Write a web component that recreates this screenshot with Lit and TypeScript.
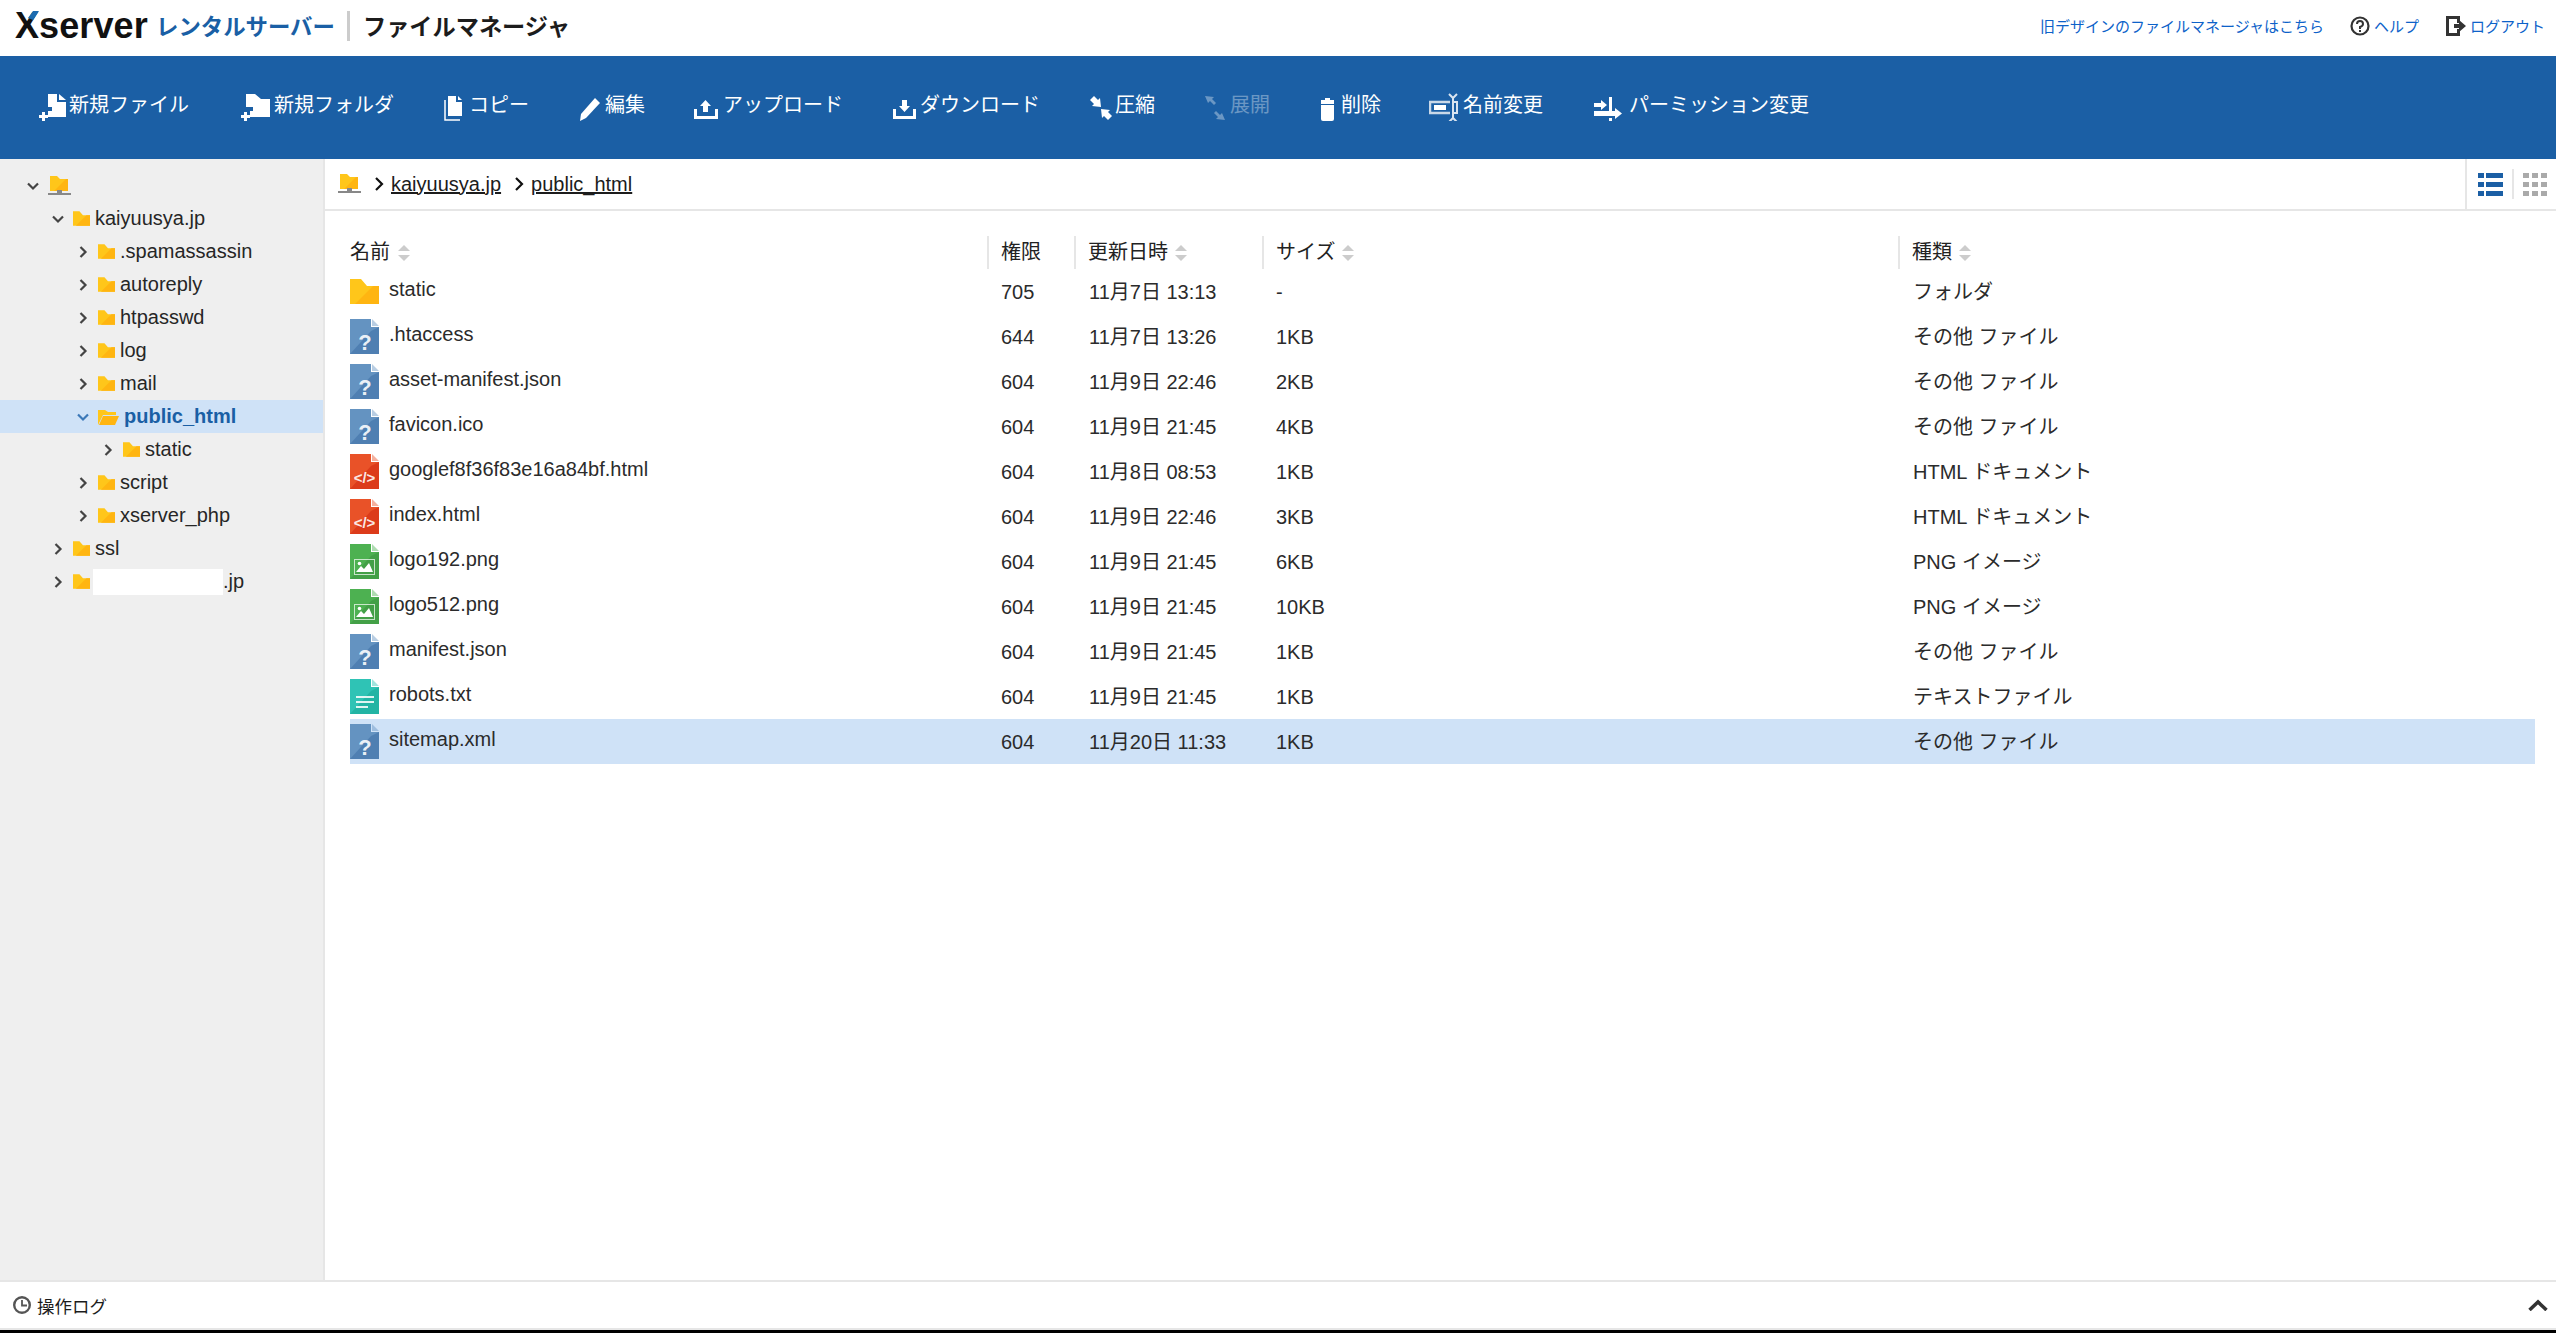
import { LitElement, html, svg, css } from 'lit';
import { customElement } from 'lit/decorators.js';

type Kind = 'folder' | 'other' | 'html' | 'image' | 'text';

const FILES: [string, string, string, string, string, Kind][] = [
  ['static', '705', '11月7日 13:13', '-', 'フォルダ', 'folder'],
  ['.htaccess', '644', '11月7日 13:26', '1KB', 'その他 ファイル', 'other'],
  ['asset-manifest.json', '604', '11月9日 22:46', '2KB', 'その他 ファイル', 'other'],
  ['favicon.ico', '604', '11月9日 21:45', '4KB', 'その他 ファイル', 'other'],
  ['googlef8f36f83e16a84bf.html', '604', '11月8日 08:53', '1KB', 'HTML ドキュメント', 'html'],
  ['index.html', '604', '11月9日 22:46', '3KB', 'HTML ドキュメント', 'html'],
  ['logo192.png', '604', '11月9日 21:45', '6KB', 'PNG イメージ', 'image'],
  ['logo512.png', '604', '11月9日 21:45', '10KB', 'PNG イメージ', 'image'],
  ['manifest.json', '604', '11月9日 21:45', '1KB', 'その他 ファイル', 'other'],
  ['robots.txt', '604', '11月9日 21:45', '1KB', 'テキストファイル', 'text'],
  ['sitemap.xml', '604', '11月20日 11:33', '1KB', 'その他 ファイル', 'other'],
];

const TREE: { name: string; level: number; open?: boolean; selected?: boolean; hidden?: boolean }[] = [
  { name: 'kaiyuusya.jp', level: 1, open: true },
  { name: '.spamassassin', level: 2 },
  { name: 'autoreply', level: 2 },
  { name: 'htpasswd', level: 2 },
  { name: 'log', level: 2 },
  { name: 'mail', level: 2 },
  { name: 'public_html', level: 2, open: true, selected: true },
  { name: 'static', level: 3 },
  { name: 'script', level: 2 },
  { name: 'xserver_php', level: 2 },
  { name: 'ssl', level: 1 },
  { name: '.jp', level: 1, hidden: true },
];

const W = '#fff';
// w: width the item takes in the row, iw: width of the icon box in front of the label
const TOOLS: { label: string; w: number; iw: number; off?: boolean; icon: unknown }[] = [
  {
    label: '新規ファイル', w: 152, iw: 30,
    icon: svg`<path fill="${W}" d="M9 1H18V9H27V24H9V18H13V14H9Z"/><path fill="${W}" d="M20 1L27 7H20Z"/><path fill="${W}" d="M3 19H6V22H9V25H6V28H3V25H0V22H3Z"/>`,
  },
  {
    label: '新規フォルダ', w: 153, iw: 33,
    icon: svg`<path fill="${W}" d="M5 1H14L20 6H29V24H9V18H12V14H5Z"/><path fill="${W}" d="M3 19H6V22H9V25H6V28H3V25H0V22H3Z"/>`,
  },
  {
    label: 'コピー', w: 85, iw: 25,
    icon: svg`<path fill="${W}" d="M4 3H12V9H18V23H4Z"/><path fill="${W}" d="M14 3L18 7H14Z"/><path fill="none" stroke="${W}" stroke-width="1.5" d="M1 7V27H16"/>`,
  },
  {
    label: '編集', w: 65, iw: 26,
    icon: svg`<path fill="${W}" d="M16 5L21 10L7 25L1 28L2 21Z"/>`,
  },
  {
    label: 'アップロード', w: 149, iw: 29,
    icon: svg`<path fill="${W}" d="M11.500 7L17 13H14V19H9V13H6Z"/><path fill="none" stroke="${W}" stroke-width="3" d="M1.500 16V24.500H22.500V16"/>`,
  },
  {
    label: 'ダウンロード', w: 147, iw: 27,
    icon: svg`<path fill="${W}" d="M9 7H14V13H17L11.500 19L6 13H9Z"/><path fill="none" stroke="${W}" stroke-width="3" d="M1.500 16V24.500H21.500V16"/>`,
  },
  {
    label: '圧縮', w: 64, iw: 25,
    icon: svg`<path fill="${W}" d="M2 5L4 3L8 7L10 5L11 14L2 13L4 11L0 7Z"/><path fill="${W}" d="M20 25L18 27L14 23L12 25L11 16L20 17L18 19L22 23Z"/>`,
  },
  {
    label: '展開', w: 66, iw: 26, off: true,
    icon: svg`<path fill="${W}" d="M1 3L10 4L8 6L12 10L10 12L6 8L4 10Z"/><path fill="${W}" d="M21 27L12 26L14 24L10 20L12 18L16 22L18 20Z"/>`,
  },
  {
    label: '削除', w: 59, iw: 21,
    icon: svg`<path fill="${W}" d="M5 5H10V7H14V11H1V7H5Z"/><path fill="${W}" d="M1 12H14V26Q14 28 12 28H3Q1 28 1 26Z"/>`,
  },
  {
    label: '名前変更', w: 115, iw: 34,
    icon: svg`<path fill="none" stroke="#c9d8e8" stroke-width="2.500" d="M21 9H1V20H21"/><rect fill="${W}" x="5" y="12" width="12" height="5"/><path fill="none" stroke="#d9e4f0" stroke-width="2" d="M24 4V26M20 1L24 5L28 1M20 29L24 25L28 29M25 9H28V20H25"/>`,
  },
  {
    label: 'パーミッション変更', w: 215, iw: 35,
    icon: svg`<path fill="${W}" d="M15 4H18V20H15Z"/><path fill="${W}" d="M0 10H7V7L13 12L7 17V14H0Z"/><path fill="${W}" d="M0 18H21V15L28 20.500L21 26V23H0Z"/><rect fill="${W}" x="15" y="25" width="3" height="3"/>`,
  },
];

const COLORS: Record<string, [string, string]> = {
  other: ['#6493c1', '#4f7fb2'],
  html: ['#e95228', '#dc3b1a'],
  image: ['#4db151', '#43a047'],
  text: ['#2fc3b5', '#22b4a4'],
};

const folderIcon = (cls: string) => html`<svg class=${cls} viewBox="0 0 29 25">
  <path fill="#ffc61a" d="M0 0H11L17 7H29V25H0Z" />
  <path fill="#ffb511" d="M29 7V25H5L23 7Z" />
</svg>`;

const rootIcon = (cls: string) => html`<svg class=${cls} viewBox="0 0 23 20">
  <path fill="#ffc61a" d="M2 0H9L12 3H20V15H2Z" />
  <path fill="#ffb511" d="M20 3V15H6L18 3Z" />
  <rect fill="#888" x="0" y="17" width="23" height="2" />
  <rect fill="#888" x="9" y="14" width="5" height="3" />
</svg>`;

const fileIcon = (kind: Kind) => {
  if (kind === 'folder') return folderIcon('big-folder');
  const [a, b] = COLORS[kind];
  let mark: unknown = '';
  if (kind === 'other') mark = svg`<text class="q" x="15" y="31" text-anchor="middle">?</text>`;
  if (kind === 'html') mark = svg`<text class="c" x="14.500" y="29" text-anchor="middle">&lt;/&gt;</text>`;
  if (kind === 'image')
    mark = svg`<rect x="4.500" y="15.500" width="20" height="15" fill="none" stroke="#fff" stroke-opacity=".7"/><path fill="#fff" d="M6 28L11 22L14 25L19 19L23 28Z"/><circle fill="#fff" cx="9.500" cy="19.500" r="1.800"/>`;
  if (kind === 'text')
    mark = svg`<path fill="#fff" fill-opacity=".85" d="M6 17H24V19H6ZM6 22H24V24H6ZM6 27H18V29H6Z"/>`;
  return html`<svg class="file" viewBox="0 0 29 35">
    <path fill=${a} d="M0 0H21V8H29V35H0Z" />
    <path fill=${b} d="M29 8V35H0L21 12Z" />
    <path fill=${a} fill-opacity=".45" d="M22 0L29 7H22Z" />
    ${mark}
  </svg>`;
};

const chevron = (open: boolean, cls = 'chev') =>
  html`<svg class=${cls} viewBox="0 0 12 12">
    <path fill="none" stroke="currentColor" stroke-width="2.200" d=${open ? 'M1 3.500L6 8.500L11 3.500' : 'M3.500 1L8.500 6L3.500 11'} />
  </svg>`;

const sorter = html`<svg class="sort" viewBox="0 0 12 16">
  <path fill="#ccc" d="M6 0L12 6H0Z" /><path fill="#ccc" d="M0 10H12L6 16Z" />
</svg>`;

@customElement('app-root')
export class AppRoot extends LitElement {
  static styles = css`
    :host {
      display: flex;
      flex-direction: column;
      height: 1333px;
      overflow: hidden;
      background: #fff;
      color: #222;
      font-family: 'Liberation Sans', 'Noto Sans CJK JP', sans-serif;
      font-size: 20px;
    }
    .top {
      height: 56px;
      flex: none;
      box-sizing: border-box;
      display: flex;
      align-items: center;
      padding: 0 11px 4px 15px;
    }
    .logo {
      position: relative;
      font-size: 36px;
      font-weight: 700;
      color: #111;
      width: 141px;
      letter-spacing: 0.1px;
    }
    .arm {
      position: absolute;
      left: 13px;
      top: 6px;
      width: 11px;
      height: 12px;
    }
    .rental {
      font-size: 22.400px;
      font-weight: 700;
      color: #1a5fa5;
      width: 191px;
      white-space: nowrap;
      margin-bottom: 2px;
    }
    .bar {
      width: 3px;
      height: 30px;
      background: #ccc;
      margin-right: 13px;
    }
    .app {
      font-size: 23.200px;
      font-weight: 700;
      color: #1c1c1c;
      margin-bottom: 2px;
    }
    .links {
      margin-left: auto;
      display: flex;
      align-items: center;
      font-size: 15px;
      color: #0d62c9;
    }
    .links span {
      white-space: nowrap;
      margin-bottom: 2px;
    }
    .links .old {
      margin-right: 26px;
    }
    .lk {
      width: 20px;
      height: 20px;
      margin-right: 4px;
    }
    .links .help {
      margin-right: 27px;
    }
    .toolbar {
      height: 103px;
      flex: none;
      background: #1b5fa5;
      display: flex;
      align-items: center;
      gap: 50px;
      padding: 0 0 8px 39px;
      box-sizing: border-box;
      color: #fff;
    }
    .tool {
      flex: none;
      display: flex;
      align-items: center;
      white-space: nowrap;
    }
    .tool svg {
      height: 28px;
      flex: none;
      margin-top: 6px;
    }
    .tool.off {
      opacity: 0.35;
    }
    .body {
      flex: 1;
      display: flex;
      min-height: 0;
    }
    .side {
      width: 323px;
      flex: none;
      box-sizing: content-box;
      background: #efefef;
      border-right: 2px solid #e6e6e6;
      padding-top: 10px;
    }
    .node {
      height: 33px;
      display: flex;
      align-items: center;
      white-space: nowrap;
      color: #262626;
    }
    .node.sel {
      background: #cfe2f7;
      color: #1a5fa5;
      font-weight: 700;
    }
    .chev {
      width: 12px;
      height: 12px;
      flex: none;
      color: #444;
      margin-right: 9px;
    }
    .sel .chev {
      color: #3b78b8;
    }
    .tree-folder {
      width: 17px;
      height: 15px;
      flex: none;
      margin-right: 5px;
    }
    .open-folder {
      width: 21px;
      height: 16px;
      flex: none;
      margin-right: 5px;
    }
    .root-folder {
      width: 23px;
      height: 20px;
      flex: none;
    }
    .mask {
      display: inline-block;
      width: 130px;
      height: 26px;
      background: #fff;
      margin-left: -2px;
    }
    .main {
      flex: 1;
      min-width: 0;
      display: flex;
      flex-direction: column;
    }
    .crumbs {
      height: 50px;
      flex: none;
      box-sizing: content-box;
      border-bottom: 2px solid #e6e6e6;
      display: flex;
      align-items: center;
      padding-left: 13px;
      color: #1c1c1c;
    }
    .crumbs .root-folder {
      margin-right: 12px;
    }
    .crumbs u {
      white-space: nowrap;
    }
    .cchev {
      width: 12px;
      height: 14px;
      color: #111;
      margin-right: 6px;
      flex: none;
    }
    .cchev.second {
      margin-left: 12px;
    }
    .views {
      margin-left: auto;
      width: 91px;
      box-sizing: border-box;
      align-self: stretch;
      border-left: 2px solid #e6e6e6;
      display: flex;
      align-items: center;
      padding-left: 11px;
    }
    .view-list {
      width: 25px;
      height: 23px;
    }
    .view-sep {
      width: 2px;
      height: 30px;
      background: #e6e6e6;
      margin: 0 9px;
    }
    .view-grid {
      width: 24px;
      height: 23px;
    }
    .table {
      padding: 25px 21px 0 25px;
    }
    .row {
      display: grid;
      grid-template-columns: 637px 87px 188px 636px 637px;
      align-items: center;
      height: 45px;
    }
    .row.head {
      height: 33px;
    }
    .row.sel {
      background: #cfe2f7;
    }
    .cell {
      padding-left: 14px;
      white-space: nowrap;
      color: #2b2b2b;
      line-height: 24px;
    }
    .cell.d {
      padding-left: 15px;
    }
    .head .cell {
      height: 33px;
      line-height: 33px;
      border-left: 2px solid #e6e6e6;
      padding-left: 12px;
      display: flex;
      align-items: center;
      gap: 7px;
      color: #222;
    }
    .head .cell.first {
      border-left: 0;
      padding-left: 0;
      gap: 8px;
    }
    .sort {
      width: 12px;
      height: 16px;
      flex: none;
    }
    .row .name {
      display: flex;
      align-items: center;
      padding-left: 0;
    }
    .name b {
      font-weight: 400;
      margin-left: 10px;
      margin-top: -5px;
    }
    .file {
      width: 29px;
      height: 35px;
      flex: none;
      font-family: 'Liberation Sans', sans-serif;
    }
    .big-folder {
      width: 29px;
      height: 25px;
      flex: none;
    }
    .q {
      font-size: 22px;
      font-weight: 700;
      fill: #fff;
      fill-opacity: 0.9;
    }
    .c {
      font-size: 15px;
      font-weight: 700;
      fill: #fff;
      fill-opacity: 0.9;
    }
    .foot {
      height: 46px;
      flex: none;
      box-sizing: content-box;
      border-top: 2px solid #e6e6e6;
      border-bottom: 2px solid #e6e6e6;
      display: flex;
      align-items: center;
      padding: 0 8px 0 13px;
      font-size: 17.500px;
      color: #1c1c1c;
    }
    .clock {
      width: 18px;
      height: 18px;
      margin-right: 6px;
    }
    .up {
      width: 20px;
      height: 12px;
      margin-left: auto;
    }
    .strip {
      height: 3px;
      flex: none;
      background: #000;
    }
  `;

  renderNode(n: (typeof TREE)[number]) {
    const pad = 27 + 25 * n.level;
    return html`<div class="node ${n.selected ? 'sel' : ''}" style="padding-left:${pad}px">
      ${chevron(!!n.open)}
      ${n.selected
        ? html`<svg class="open-folder" viewBox="0 0 21 16">
            <path fill="#ffc61a" d="M0 16V1H7L10 3H18V6H5Z" />
            <path fill="#ffb511" d="M5 7H21L17 16H1Z" />
          </svg>`
        : folderIcon('tree-folder')}
      ${n.hidden ? html`<span class="mask"></span>` : ''}<span>${n.name}</span>
    </div>`;
  }

  render() {
    return html`
      <div class="top">
        <div class="logo">
          Xserver
          <svg class="arm" viewBox="0 0 11 12"><path fill="#1b6bb0" d="M5 0H11L5 9L0 7Z" /></svg>
        </div>
        <div class="rental">レンタルサーバー</div>
        <div class="bar"></div>
        <div class="app">ファイルマネージャ</div>
        <div class="links">
          <span class="old">旧デザインのファイルマネージャはこちら</span>
          <svg class="lk" viewBox="0 0 20 20">
            <circle cx="10" cy="10" r="8.500" fill="none" stroke="#333" stroke-width="2.200" />
            <path fill="none" stroke="#333" stroke-width="2" d="M7 8Q7 5 10 5Q13 5 13 8Q13 10 10 11V13" />
            <rect fill="#333" x="9" y="14" width="2" height="2" />
          </svg>
          <span class="help">ヘルプ</span>
          <svg class="lk" viewBox="0 0 20 20">
            <path fill="#333" d="M0 0H14V7H11V3H3V17H11V13H14V20H0Z" />
            <path fill="#333" d="M8 8H13V4L20 10L13 16V12H8Z" />
          </svg>
          <span>ログアウト</span>
        </div>
      </div>
      <div class="toolbar">
        ${TOOLS.map(
          (t) => html`<div class="tool ${t.off ? 'off' : ''}" style="width:${t.w}px">
            <svg width=${t.iw} viewBox="0 0 ${t.iw} 28">${t.icon}</svg>
            <span>${t.label}</span>
          </div>`,
        )}
      </div>
      <div class="body">
        <div class="side">
          <div class="node" style="padding-left:27px">${chevron(true)}${rootIcon('root-folder')}</div>
          ${TREE.map((n) => this.renderNode(n))}
        </div>
        <div class="main">
          <div class="crumbs">
            ${rootIcon('root-folder')}
            <svg class="cchev" viewBox="0 0 12 14"><path fill="none" stroke="currentColor" stroke-width="2.200" d="M3 1L9 7L3 13" /></svg>
            <u>kaiyuusya.jp</u>
            <svg class="cchev second" viewBox="0 0 12 14"><path fill="none" stroke="currentColor" stroke-width="2.200" d="M3 1L9 7L3 13" /></svg>
            <u>public_html</u>
            <div class="views">
              <svg class="view-list" viewBox="0 0 25 23">
                <path fill="#1b5fa5" d="M0 0H6V5H0ZM8 0H25V5H8ZM0 9H6V14H0ZM8 9H25V14H8ZM0 18H6V23H0ZM8 18H25V23H8Z" />
              </svg>
              <div class="view-sep"></div>
              <svg class="view-grid" viewBox="0 0 24 23">
                <path fill="#aaa" d="M0 0H6V5H0ZM9 0H15V5H9ZM18 0H24V5H18ZM0 9H6V14H0ZM9 9H15V14H9ZM18 9H24V14H18ZM0 18H6V23H0ZM9 18H15V23H9ZM18 18H24V23H18Z" />
              </svg>
            </div>
          </div>
          <div class="table">
            <div class="row head">
              <div class="cell first">名前${sorter}</div>
              <div class="cell">権限</div>
              <div class="cell">更新日時${sorter}</div>
              <div class="cell">サイズ${sorter}</div>
              <div class="cell">種類${sorter}</div>
            </div>
            ${FILES.map(
              (f) => html`<div class="row ${f[0] === 'sitemap.xml' ? 'sel' : ''}">
                <div class="cell name">${fileIcon(f[5])}<b>${f[0]}</b></div>
                <div class="cell">${f[1]}</div>
                <div class="cell d">${f[2]}</div>
                <div class="cell">${f[3]}</div>
                <div class="cell d">${f[4]}</div>
              </div>`,
            )}
          </div>
        </div>
      </div>
      <div class="foot">
        <svg class="clock" viewBox="0 0 18 18">
          <circle cx="9" cy="9" r="7.800" fill="none" stroke="#555" stroke-width="2.400" />
          <path fill="none" stroke="#555" stroke-width="1.800" d="M9 4V9.500H14" />
        </svg>
        <span>操作ログ</span>
        <svg class="up" viewBox="0 0 20 12"><path fill="none" stroke="#333" stroke-width="3.500" d="M1.500 11L10 3L18.500 11" /></svg>
      </div>
      <div class="strip"></div>
    `;
  }
}
